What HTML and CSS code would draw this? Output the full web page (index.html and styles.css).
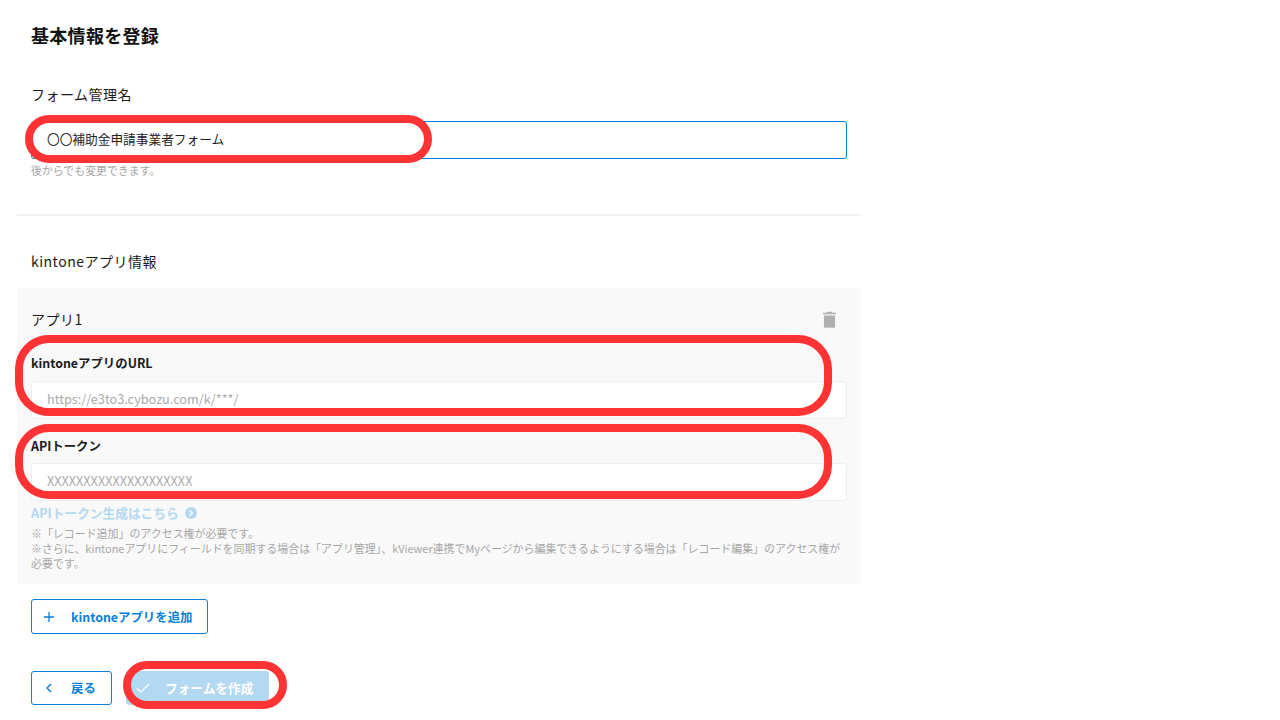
FILE: index.html
```html
<!DOCTYPE html>
<html lang="ja">
<head>
    <meta charset="UTF-8">
    <title>基本情報を登録</title>
    <link rel="stylesheet" href="styles.css">
</head>
<body>
    <main class="form-page">
        <h1 class="page-title">基本情報を登録</h1>

        <div class="section-label form-name-label">フォーム管理名</div>
        <input class="text-input is-focus" type="text" value="〇〇補助金申請事業者フォーム">
        <p class="hint">後からでも変更できます。</p>

        <hr class="divider">

        <div class="section-label">kintoneアプリ情報</div>

        <section class="app-panel">
            <div class="app-head">
                <span class="section-label">アプリ1</span>
                <svg class="trash-icon" viewBox="0 0 14 18" width="13" height="17">
                    <path d="M4.500 .6h5l.8 1.200H14v1.500H0V1.800h3.700z" fill="#b0b0b0"/>
                    <path d="M1 4.600h12v11.600c0 1-.8 1.800-1.800 1.800H2.800C1.800 18 1 17.200 1 16.200z" fill="#b0b0b0"/>
                </svg>
            </div>

            <label class="field-label url-label">kintoneアプリのURL</label>
            <input class="text-input" type="text" placeholder="https://e3to3.cybozu.com/k/***/">

            <label class="field-label token-label">APIトークン</label>
            <input class="text-input" type="text" placeholder="XXXXXXXXXXXXXXXXXXXX">

            <a class="token-link">APIトークン生成はこちら
                <svg viewBox="0 0 12 12" width="12" height="12">
                    <circle cx="6" cy="6" r="6" fill="#b3d8f2"/>
                    <path d="M4.800 3.400 7.400 6l-2.600 2.600" fill="none" stroke="#f9f9f9" stroke-width="1.500"/>
                </svg>
            </a>
            <p class="note">※「レコード追加」のアクセス権が必要です。<br>※さらに、kintoneアプリにフィールドを同期する場合は「アプリ管理」、kViewer連携でMyページから編集できるようにする場合は「レコード編集」のアクセス権が必要です。</p>
        </section>

        <button class="btn btn-add" type="button">
            <svg class="btn-icon" viewBox="0 0 10 10" width="10" height="10">
                <path d="M5 0v10M0 5h10" fill="none" stroke="#0a7fd9" stroke-width="1.300"/>
            </svg>
            kintoneアプリを追加
        </button>

        <div class="button-row">
            <button class="btn btn-back" type="button">
                <svg class="btn-icon" viewBox="0 0 6 10" width="6" height="10">
                    <path d="M5 1 1 5l4 4" fill="none" stroke="#0a7fd9" stroke-width="1.500"/>
                </svg>
                戻る
            </button>
            <button class="btn btn-create" type="button">
                <svg class="btn-icon" viewBox="0 0 14 10" width="14" height="10">
                    <path d="M1 5.500 5 9l8-8" fill="none" stroke="#ffffff" stroke-width="1.200"/>
                </svg>
                フォームを作成
            </button>
        </div>
    </main>

    <!-- red markers drawn over the screenshot -->
    <div class="marker marker-name"></div>
    <div class="marker marker-url"></div>
    <div class="marker marker-token"></div>
    <div class="marker marker-create"></div>
</body>
</html>
```

FILE: styles.css
```css
:root {
    --text: #1a1a1a;
    --muted: #a6a6a6;
    --blue: #0a7fd9;
    --blue-light: #b3d8f2;
    --panel: #f9f9f9;
    --line: #f2f2f2;
    --marker: #ff3333;
}

html, body {
    height: 720px;
    overflow: hidden;
}

body {
    position: relative;
    margin: 0;
    background: #ffffff;
    color: var(--text);
    font-family: "Noto Sans CJK JP", "Noto Sans", sans-serif;
}

.form-page {
    box-sizing: border-box;
    width: 844px;
    margin-left: 17px;
    padding: 22px 14px 0;
}

.page-title {
    margin: 0;
    color: #111111;
    font-size: 18px;
    line-height: 26px;
    font-weight: 700;
    letter-spacing: 0.3px;
}

.section-label {
    font-size: 14px;
    line-height: 20px;
    letter-spacing: 0.5px;
}

.form-name-label {
    margin-top: 36px;
}

.text-input {
    display: block;
    box-sizing: border-box;
    width: 100%;
    height: 38px;
    padding: 0 15px 4px;
    border: 1px solid #eeeeee;
    border-radius: 3px;
    outline: none;
    background: #ffffff;
    color: #222222;
    font-family: inherit;
    font-size: 12.700px;
}

.text-input::placeholder {
    color: #aaaaaa;
    opacity: 1;
}

.text-input.is-focus {
    margin-top: 17px;
    border-color: var(--blue);
}

.hint {
    margin: 4px 0 0;
    color: var(--muted);
    font-size: 10.900px;
    line-height: 14px;
}

.divider {
    height: 2px;
    margin: 37px -14px 35px;
    border: none;
    background: var(--line);
}

.app-panel {
    margin: 17px -14px 0;
    padding: 21px 14px 13px;
    background: var(--panel);
}

.app-head {
    display: flex;
    justify-content: space-between;
    align-items: center;
    height: 20px;
}

.trash-icon {
    margin-right: 11px;
}

.field-label {
    display: block;
    font-size: 12.400px;
    line-height: 18px;
    font-weight: 700;
}

.url-label {
    margin: 25px 0 9px;
}

.token-label {
    margin: 18px 0 8px;
}

.token-link {
    display: flex;
    align-items: center;
    gap: 6px;
    margin-top: 4px;
    color: var(--blue-light);
    font-size: 12.700px;
    line-height: 16px;
    font-weight: 700;
}

.note {
    margin: 5px 0 0;
    color: var(--muted);
    font-size: 10.950px;
    line-height: 15px;
}

.btn {
    display: flex;
    align-items: center;
    box-sizing: border-box;
    padding: 0;
    border: 1px solid var(--blue);
    border-radius: 3px;
    background: #ffffff;
    color: var(--blue);
    font-family: inherit;
    font-size: 12.400px;
    font-weight: 700;
}

.btn-add {
    width: 177px;
    height: 35px;
    margin-top: 15px;
    padding-left: 12px;
}

.btn-add .btn-icon {
    margin-right: 17px;
}

.button-row {
    display: flex;
    gap: 14px;
    margin-top: 37px;
}

.btn-back {
    width: 81px;
    height: 34px;
    padding: 0 0 1px 14px;
}

.btn-back .btn-icon {
    margin: 1px 19px 0 0;
}

.btn-create {
    width: 143px;
    height: 34px;
    padding: 0 0 1px 9px;
    border-color: var(--blue-light);
    background: var(--blue-light);
    color: #ffffff;
    font-size: 12.700px;
}

.btn-create .btn-icon {
    margin: 1px 15px 0 0;
}

.marker {
    position: absolute;
    box-sizing: border-box;
    border: 8px solid var(--marker);
}

.marker-name {
    left: 25px;
    top: 115px;
    width: 407px;
    height: 48px;
    border-radius: 24px;
}

.marker-url {
    left: 15px;
    top: 335px;
    width: 817px;
    height: 81px;
    border-radius: 34px;
}

.marker-token {
    left: 15px;
    top: 424px;
    width: 817px;
    height: 75px;
    border-radius: 34px;
}

.marker-create {
    left: 123px;
    top: 661px;
    width: 164px;
    height: 48px;
    border-radius: 24px;
}
```
